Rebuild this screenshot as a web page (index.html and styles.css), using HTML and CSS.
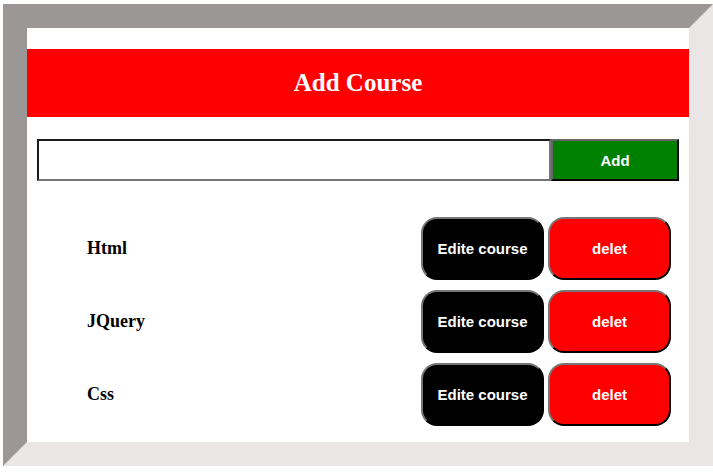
FILE: index.html
```html
<!DOCTYPE html>
<html>
<head>
<meta charset="utf-8">
<link rel="stylesheet" href="styles.css">
</head>
<body>
<div class="box">
  <h1 class="title">Add Course</h1>
  <div class="add-row">
    <input class="course-input" type="text">
    <button class="add-btn">Add</button>
  </div>
  <ul class="courses">
    <li class="course"><span class="name">Html</span><div class="actions"><button class="btn edit">Edite course</button><button class="btn del">delet</button></div></li>
    <li class="course"><span class="name">JQuery</span><div class="actions"><button class="btn edit">Edite course</button><button class="btn del">delet</button></div></li>
    <li class="course"><span class="name">Css</span><div class="actions"><button class="btn edit">Edite course</button><button class="btn del">delet</button></div></li>
  </ul>
</div>
</body>
</html>
```
FILE: styles.css
```css
html, body {
  margin: 0;
  padding: 0;
  background: #ffffff;
  overflow: hidden;
}
body {
  font-family: "Liberation Serif", serif;
}
.box {
  margin: 4px 0 0 3px;
  width: 662px;
  height: 393px;
  border-style: solid;
  border-width: 24px;
  border-color: #9b9796 #ebe6e6 #ebe6e6 #9b9796;
  background: #ffffff;
  padding-top: 21px;
}
.title {
  margin: 0;
  height: 68px;
  background: #ff0000;
  color: #ffffff;
  font-size: 25px;
  font-weight: bold;
  display: flex;
  align-items: center;
  justify-content: center;
}
.add-row {
  display: flex;
  margin: 22px 10px 0 10px;
  height: 42px;
}
.course-input {
  box-sizing: border-box;
  width: 514px;
  height: 42px;
  margin: 0;
  border: 2px solid;
  border-color: #1a1a1a #767676 #767676 #1a1a1a;
  background: #fff;
}
.add-btn {
  box-sizing: border-box;
  width: 128px;
  height: 42px;
  margin: 0;
  border: 2px solid;
  border-color: #666666 #000000 #000000 #666666;
  background: #008000;
  color: #ffffff;
  font-family: "Liberation Sans", Arial, sans-serif;
  font-size: 15px;
  font-weight: bold;
}
.courses {
  list-style: none;
  margin: 36px 18px 0 60px;
  padding: 0;
  display: flex;
  flex-direction: column;
  gap: 10px;
}
.course {
  display: flex;
  align-items: center;
  justify-content: space-between;
  height: 63px;
}
.name {
  font-size: 18px;
  font-weight: bold;
  color: #000;
}
.actions {
  display: flex;
  gap: 4px;
}
.btn {
  box-sizing: border-box;
  width: 123px;
  height: 63px;
  margin: 0;
  border: 2px solid;
  border-color: #767676 #000000 #000000 #767676;
  border-radius: 16px;
  color: #ffffff;
  font-family: "Liberation Sans", Arial, sans-serif;
  font-size: 15px;
  font-weight: bold;
}
.edit { background: #000000; }
.del { background: #ff0000; }
```
